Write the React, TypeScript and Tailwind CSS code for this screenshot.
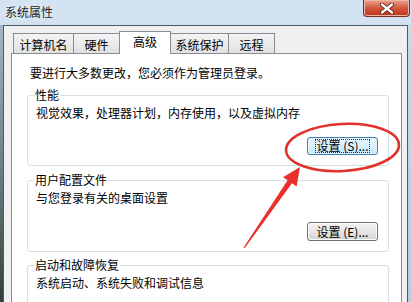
import React from "react";

function Tab({ label, cls }: { label: string; cls: string }) {
  return (
    <div
      className={`h-[20px] border-t border-[#898c95] bg-gradient-to-b from-[#f4f4f4] to-[#e1e1e1] pt-[4px] text-center ${cls}`}
    >
      {label}
    </div>
  );
}

function Btn({ label, focused }: { label: string; focused?: boolean }) {
  return (
    <div
      className={
        focused
          ? "ml-auto mr-[10px] flex h-[18px] w-[71px] items-center justify-center rounded-[3px] border border-[#3c7fb1] bg-gradient-to-b from-[#eaf6fd] via-[#d9f0fc] to-[#bee6fd] shadow-[inset_0_0_0_1px_#e8f5fc]"
          : "ml-auto mr-[10px] flex h-[19px] w-[71px] items-center justify-center rounded-[3px] border border-[#707070] bg-gradient-to-b from-[#f2f2f2] via-[#e6e6e6] to-[#d2d2d2] shadow-[inset_0_0_0_1px_#fbfbfb]"
      }
    >
      <span
        className={
          focused
            ? "whitespace-pre border border-dotted border-[#333] px-[1px] leading-[12px]"
            : "whitespace-pre px-[2px] leading-[12px]"
        }
      >
        {label}
      </span>
    </div>
  );
}

function Group({
  title,
  text,
  cls,
  children,
}: {
  title: string;
  text: string;
  cls: string;
  children?: React.ReactNode;
}) {
  return (
    <fieldset className={`rounded-[3px] border border-[#d5dfe5] px-0 ${cls}`}>
      <legend className="ml-[6px] px-[1px]">{title}</legend>
      <div className="pl-[8px] pt-[4px]">{text}</div>
      {children}
    </fieldset>
  );
}

export default function App() {
  return (
    <div className="relative h-[302px] w-[411px] overflow-hidden bg-gradient-to-b from-[#d3e3f2] to-[#bfd2e6] font-['Noto_Sans_CJK_SC','Noto_Sans',sans-serif] text-[12px] leading-[14px] text-black">
      {/* title bar */}
      <div className="flex h-[25px] items-start justify-between">
        <div className="pl-[5px] pt-[5px] text-[#1c1c1c] [text-shadow:0_0_6px_#ffffff]">
          系统属性
        </div>
        <div className="mr-[1px] flex h-[17px] w-[47px] items-center justify-center rounded-b-[4px] border border-t-0 border-[#7e2a1c] bg-gradient-to-b from-[#e9a392] via-[#d2553d] to-[#c0311a] shadow-[inset_0_0_0_1px_#f0b3a4]">
          <svg width="14" height="11" viewBox="0 0 14 11">
            <path
              d="M2 1.5 L12 9.5 M12 1.5 L2 9.5"
              stroke="#4a1a12"
              strokeWidth="4"
              strokeLinecap="round"
            />
            <path
              d="M2 1.5 L12 9.5 M12 1.5 L2 9.5"
              stroke="#ffffff"
              strokeWidth="2.4"
              strokeLinecap="round"
            />
          </svg>
        </div>
      </div>

      {/* frame body */}
      <div className="flex h-[277px]">
        <div className="w-[3px] bg-gradient-to-b from-[#a4b5c6] via-[#6f7f86] to-[#33403d]" />
        <div className="flex flex-1 flex-col border-x border-t border-[#4d5b69] bg-[#f0f0f0] pl-[7px] pr-[5px] pt-[5px]">
          {/* tabs */}
          <div className="ml-[2px] flex h-[22px] items-end">
            <Tab label="计算机名" cls="w-[60px] border-l" />
            <Tab label="硬件" cls="w-[46px] border-l" />
            <div className="relative z-10 -mb-px h-[23px] w-[52px] border-x border-t border-[#898c95] bg-white pt-[3px] text-center">
              高级
            </div>
            <Tab label="系统保护" cls="w-[57px]" />
            <Tab label="远程" cls="w-[47px] border-x" />
          </div>
          {/* panel */}
          <div className="flex-1 border border-[#898c95] bg-white pl-[15px] pr-[12px] pt-[12px]">
            <div className="pl-[3px]">要进行大多数更改，您必须作为管理员登录。</div>
            <Group
              title="性能"
              text="视觉效果，处理器计划，内存使用，以及虚拟内存"
              cls="mt-[8px] pb-[10px]"
            >
              <div className="mt-[17px] flex">
                <Btn label="设置 (S)..." focused />
              </div>
            </Group>
            <Group
              title="用户配置文件"
              text="与您登录有关的桌面设置"
              cls="mt-[7px] pb-[10px]"
            >
              <div className="mt-[17px] flex">
                <Btn label="设置 (E)..." />
              </div>
            </Group>
            <Group
              title="启动和故障恢复"
              text="系统启动、系统失败和调试信息"
              cls="mt-[6px] pb-[30px]"
            />
          </div>
        </div>
        <div className="w-[3px] bg-gradient-to-b from-[#c9d9e8] to-[#b9cadb]" />
      </div>

      {/* red annotation */}
      <svg
        className="pointer-events-none absolute left-0 top-0 z-20"
        width="411"
        height="302"
        viewBox="0 0 411 302"
      >
        <ellipse
          cx="342.5"
          cy="147.5"
          rx="56.5"
          ry="23.5"
          transform="rotate(-3 342.5 147.5)"
          fill="none"
          stroke="#e2322c"
          strokeWidth="2.6"
        />
        <polygon
          points="300,167 296.6,186.6 292,183.3 244.8,248 243.6,247.4 287.6,180.3 283,177.2"
          fill="#ea302b"
        />
      </svg>
    </div>
  );
}
